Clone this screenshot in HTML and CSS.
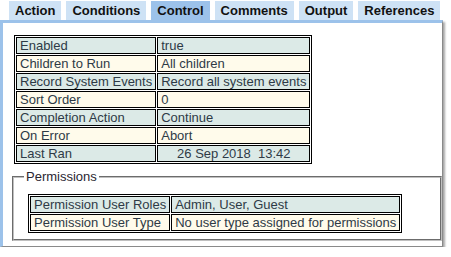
FILE: index.html
```html
<!doctype html>
<html lang="en">
<head>
    <title>Task properties</title>
    <meta charset="utf-8" name="viewport" content="width=device-width,initial-scale=1">
    <link rel="stylesheet" href="styles.css">
</head>
<body>
    <div class="tabs">
        <div class="tab">Action</div>
        <div class="tab">Conditions</div>
        <div class="tab selected">Control</div>
        <div class="tab">Comments</div>
        <div class="tab">Output</div>
        <div class="tab">References</div>
    </div>
    <div class="panel">
        <table class="props">
            <tr class="odd"><td>Enabled</td><td>true</td></tr>
            <tr class="even"><td>Children to Run</td><td>All children</td></tr>
            <tr class="odd"><td>Record System Events</td><td>Record all system events</td></tr>
            <tr class="even"><td>Sort Order</td><td>0</td></tr>
            <tr class="odd"><td>Completion Action</td><td>Continue</td></tr>
            <tr class="even"><td>On Error</td><td>Abort</td></tr>
            <tr class="odd"><td>Last Ran</td><td class="center">26 Sep 2018&nbsp;&nbsp;13:42</td></tr>
        </table>
        <fieldset class="group">
            <legend>Permissions</legend>
            <table class="props">
                <tr class="odd"><td>Permission User Roles</td><td>Admin, User, Guest</td></tr>
                <tr class="even"><td>Permission User Type</td><td>No user type assigned for permissions</td></tr>
            </table>
        </fieldset>
    </div>
</body>
</html>
```

FILE: styles.css
```css
body{
    margin: 0;
    font-family: "Liberation Sans", Arial, sans-serif;
    font-size: 13px;
    background-color: #ffffff;
}
.tabs{
    display: flex;
    flex-direction: row;
    gap: 5px;
    padding: 1px 0 0 9px;
}
.tab{
    height: 19px;
    line-height: 19px;
    padding: 0 6px;
    font-weight: bold;
    color: #111111;
    background-color: #cee2f5;
}
.tab.selected{
    background-color: #9cc2ea;
}
.panel{
    width: 439px;
    border-top: 3px solid #9cc2ea;
    border-left: 3px solid #9cc2ea;
    border-right: 1px solid #8a8a8a;
    border-bottom: 1px solid #8a8a8a;
    box-shadow: 2px 2px 2px rgba(0, 0, 0, 0.35);
    padding: 12px 0 5px 0;
}
.props{
    border: 1px solid #000000;
    border-spacing: 1px;
    color: #2e3a46;
    line-height: 15px;
}
.panel > .props{
    margin-left: 11px;
}
.props td{
    border: 1px solid #000000;
    padding: 0 3px;
    white-space: nowrap;
}
.props .center{
    text-align: center;
}
.odd td{
    background-color: #dceae7;
}
.even td{
    background-color: #fffbeb;
}
.group{
    margin: 5px 0 0 9px;
    padding: 10px 0 6px 14px;
    border: 2px groove #c0c0c0;
}
.group legend{
    margin-left: -4px;
    padding: 0 2px;
    line-height: 15px;
    color: #2a2630;
}
```
